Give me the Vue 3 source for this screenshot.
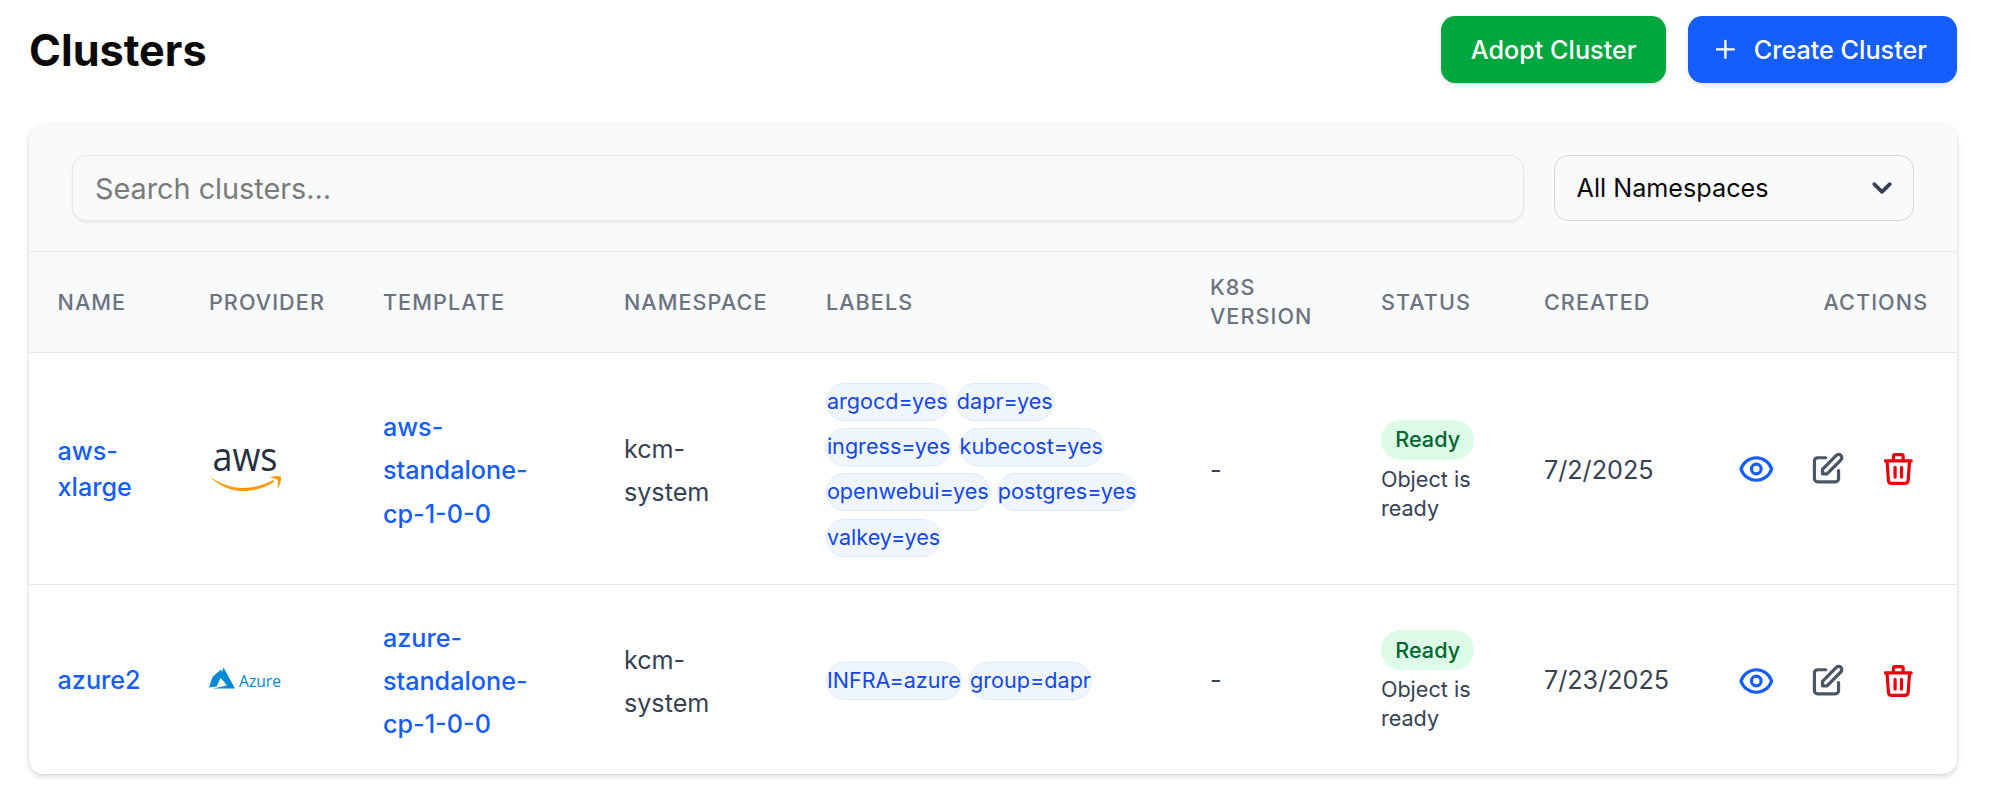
<script setup>
const heads = ['Name', 'Provider', 'Template', 'Namespace', 'Labels', 'K8s Version', 'Status', 'Created', 'Actions']
const rows = [
  {
    name: 'aws-xlarge',
    provider: 'aws',
    template: 'aws-standalone-cp-1-0-0',
    namespace: 'kcm-system',
    labels: ['argocd=yes', 'dapr=yes', 'ingress=yes', 'kubecost=yes', 'openwebui=yes', 'postgres=yes', 'valkey=yes'],
    created: '7/2/2025',
  },
  {
    name: 'azure2',
    provider: 'azure',
    template: 'azure-standalone-cp-1-0-0',
    namespace: 'kcm-system',
    labels: ['INFRA=azure', 'group=dapr'],
    created: '7/23/2025',
  },
]
</script>

<template>
  <main class="page">
    <header class="top">
      <h1 class="title">Clusters</h1>
      <div class="top-actions">
        <button class="btn btn-green">Adopt Cluster</button>
        <button class="btn btn-blue">
          <svg class="plus" viewBox="0 0 24 24" fill="none" stroke="currentColor" stroke-width="2" stroke-linecap="round" stroke-linejoin="round">
            <path d="M5 12h14M12 5v14" />
          </svg>
          Create Cluster
        </button>
      </div>
    </header>

    <section class="card">
      <div class="toolbar">
        <input class="search" type="text" placeholder="Search clusters..." />
        <div class="select-wrap">
          <select class="select">
            <option>All Namespaces</option>
          </select>
          <svg class="chev" viewBox="0 0 20 20" fill="none" stroke="#364153" stroke-width="2.8" stroke-linecap="round" stroke-linejoin="round">
            <path d="M4 7l6 6 6-6" />
          </svg>
        </div>
      </div>

      <table class="table">
        <colgroup>
          <col class="c1" /><col class="c2" /><col class="c3" /><col class="c4" /><col class="c5" />
          <col class="c6" /><col class="c7" /><col class="c8" /><col class="c9" />
        </colgroup>
        <thead>
          <tr>
            <th v-for="h in heads" :key="h">{{ h }}</th>
          </tr>
        </thead>
        <tbody>
          <tr v-for="r in rows" :key="r.name">
            <td class="name"><a class="link">{{ r.name }}</a></td>
            <td class="prov">
              <svg v-if="r.provider === 'aws'" class="logo" viewBox="0 0 72 46">
                <text x="3.5" y="24" font-family="Open Sans, sans-serif" font-size="40" font-weight="400" fill="#252f3e" textLength="65" lengthAdjust="spacingAndGlyphs">aws</text>
                <path d="M0.5 29.5C12 37 22 41 34 41C45 41 55 38 64 33L65 35C55 41 45 44 34 44C21 44 9 38 0.5 29.5Z" fill="#ff9900" />
                <path d="M61 30.5C65 29 70 28.5 72 30C72.5 33 71 38 68.5 41.5C68.5 38 69.5 34.5 68.5 33C67 31.5 64 31.5 61 30.5Z" fill="#ff9900" />
              </svg>
              <svg v-else class="logo" viewBox="0 0 72 46">
                <path d="M12 10.5L3.5 18L0 28.5L7.5 27.5L13.5 15Z" fill="#0089d6" />
                <path d="M14.5 8.5L11 18L18 26.5L4 29.5L26 29.5Z" fill="#0089d6" />
                <text x="30" y="27.5" font-family="Open Sans, sans-serif" font-size="15.5" fill="#0089d6" textLength="42" lengthAdjust="spacingAndGlyphs">Azure</text>
              </svg>
            </td>
            <td class="tall"><a class="link">{{ r.template }}</a></td>
            <td class="tall ns">{{ r.namespace }}</td>
            <td class="lab">
              <div class="labels">
                <span v-for="l in r.labels" :key="l" class="pill">{{ l }}</span>
              </div>
            </td>
            <td class="ns dash">-</td>
            <td class="stat">
              <div class="status">
                <span class="ready">Ready</span>
                <span class="msg">Object is ready</span>
              </div>
            </td>
            <td class="date">{{ r.created }}</td>
            <td>
              <div class="acts">
                <svg class="ico blue" viewBox="0 0 24 24" fill="none" stroke="currentColor" stroke-width="2" stroke-linecap="round" stroke-linejoin="round">
                  <path d="M15 12a3 3 0 11-6 0 3 3 0 016 0z" />
                  <path d="M2.458 12C3.732 7.943 7.523 5 12 5c4.478 0 8.268 2.943 9.542 7-1.274 4.057-5.064 7-9.542 7-4.477 0-8.268-2.943-9.542-7z" />
                </svg>
                <svg class="ico gray" viewBox="0 0 24 24" fill="none" stroke="currentColor" stroke-width="2" stroke-linecap="round" stroke-linejoin="round">
                  <path d="M11 5H6a2 2 0 00-2 2v11a2 2 0 002 2h11a2 2 0 002-2v-5m-1.414-9.414a2 2 0 112.828 2.828L11.828 15H9v-2.828l8.586-8.586z" />
                </svg>
                <svg class="ico red" viewBox="0 0 24 24" fill="none" stroke="currentColor" stroke-width="2" stroke-linecap="round" stroke-linejoin="round">
                  <path d="M19 7l-.867 12.142A2 2 0 0116.138 21H7.862a2 2 0 01-1.995-1.858L5 7m5 4v6m4-6v6m1-10V4a1 1 0 00-1-1h-4a1 1 0 00-1 1v3M4 7h16" />
                </svg>
              </div>
            </td>
          </tr>
        </tbody>
      </table>
    </section>
  </main>
</template>

<style scoped>
.page {
  padding: 16px 41px 26px 29px;
  font-family: Inter, "Liberation Sans", sans-serif;
  color: #374151;
}
.top {
  display: flex;
  align-items: center;
  justify-content: space-between;
  margin-bottom: 42px;
}
.title {
  margin: 0;
  font-size: 43.2px;
  line-height: 1.25;
  font-weight: 700;
  color: #0a0a0a;
}
.top-actions {
  display: flex;
  gap: 22px;
}
.btn {
  display: inline-flex;
  align-items: center;
  height: 67px;
  padding: 0 29px 0 30px;
  border: 0;
  border-radius: 14.4px;
  color: #fff;
  font-family: inherit;
  font-size: 25.2px;
  font-weight: 500;
  box-shadow: 0 2px 4px rgba(0, 0, 0, 0.12);
}
.btn-green { background: #00a63e; }
.btn-blue { background: #155dfc; padding: 0 30px 0 23px; gap: 14.4px; }
.plus { width: 28.8px; height: 28.8px; }

.card {
  background: #fff;
  border-radius: 14.4px;
  box-shadow: 0 3px 6px -1px rgba(0, 0, 0, 0.18), 0 0 3px rgba(0, 0, 0, 0.08);
  overflow: hidden;
}
.toolbar {
  display: flex;
  gap: 30px;
  padding: 30px 43px;
  background: #f9fafb;
  border-bottom: 1.5px solid #e5e7eb;
}
.search {
  flex: 1;
  min-width: 0;
  height: 66px;
  box-sizing: border-box;
  padding: 0 22px;
  background: #f9fafb;
  border: 1.5px solid #e5e7eb;
  border-radius: 14.4px;
  box-shadow: 0 2px 3px rgba(0, 0, 0, 0.06);
  font-family: inherit;
  font-size: 28.8px;
  color: #111827;
  outline: none;
}
.search::placeholder { color: #7a7a7a; opacity: 1; }
.select-wrap {
  position: relative;
  width: 360px;
}
.select {
  appearance: none;
  width: 100%;
  height: 66px;
  box-sizing: border-box;
  padding: 0 21.5px;
  background: #f9fafb;
  border: 1.5px solid #d1d5db;
  border-radius: 14.4px;
  font-family: inherit;
  font-size: 25.2px;
  color: #0a0a0a;
}
.chev {
  position: absolute;
  right: 19px;
  top: 20px;
  width: 26px;
  height: 26px;
}

.table {
  width: 100%;
  table-layout: fixed;
  border-collapse: separate;
  border-spacing: 0;
}
.c1 { width: 151.4px; }
.c2 { width: 174px; }
.c3 { width: 241px; }
.c4 { width: 202px; }
.c5 { width: 384px; }
.c6 { width: 171px; }
.c7 { width: 163px; }
.c8 { width: 193px; }
th {
  height: 100px;
  padding: 0 28.8px 0 28.5px;
  background: #f9fafb;
  border-bottom: 1.5px solid #e5e7eb;
  font-size: 21.6px;
  line-height: 28.8px;
  font-weight: 500;
  letter-spacing: 0.05em;
  text-transform: uppercase;
  text-align: left;
  color: #6b7280;
}
th:last-child { text-align: right; }
td {
  padding: 30px 28.8px 27.5px 28.5px;
  border-bottom: 1.5px solid #e5e7eb;
  font-size: 25.2px;
  line-height: 36px;
  vertical-align: middle;
}
.tall { padding-top: 32.6px; line-height: 43.2px; }
.name { padding-bottom: 28.3px; }
tbody tr:last-child td { border-bottom: 0; padding-top: 32px; padding-bottom: 27px; }
tbody tr:last-child .name,
tbody tr:last-child .date,
tbody tr:last-child .dash { padding-top: 30px; padding-bottom: 29px; }
tbody tr:last-child .status { padding-top: 0; }
tbody tr:last-child .labels { margin-bottom: 2px; }
.link { color: #155dfc; font-weight: 500; }
.ns { color: #364153; }
.date { color: #364153; }
.logo { display: block; width: 72px; height: 46px; overflow: visible; }
.labels {
  display: flex;
  flex-wrap: wrap;
  gap: 7.2px;
}
.pill {
  box-sizing: border-box;
  height: 38px;
  border: 1.5px solid #dbeafe;
  border-radius: 19px;
  background: #eff6ff;
  color: #1447e6;
  font-size: 21.6px;
  line-height: 34px;
}
.status {
  display: flex;
  flex-direction: column;
  align-items: flex-start;
  gap: 5.5px;
  padding-top: 3.5px;
}
.ready {
  padding: 5.4px 14.4px;
  border-radius: 20px;
  background: #dcfce7;
  color: #016630;
  font-size: 21.6px;
  line-height: 28.8px;
  font-weight: 500;
}
.msg {
  color: #364153;
  font-size: 21.6px;
  line-height: 29px;
}
.acts {
  display: flex;
  justify-content: flex-end;
  gap: 32.5px;
  padding-right: 10.5px;
  margin-bottom: 2px;
}
.ico { width: 40px; height: 40px; display: block; }
.blue { color: #155dfc; }
.gray { color: #4a5565; }
.red { color: #e7000b; }
</style>
